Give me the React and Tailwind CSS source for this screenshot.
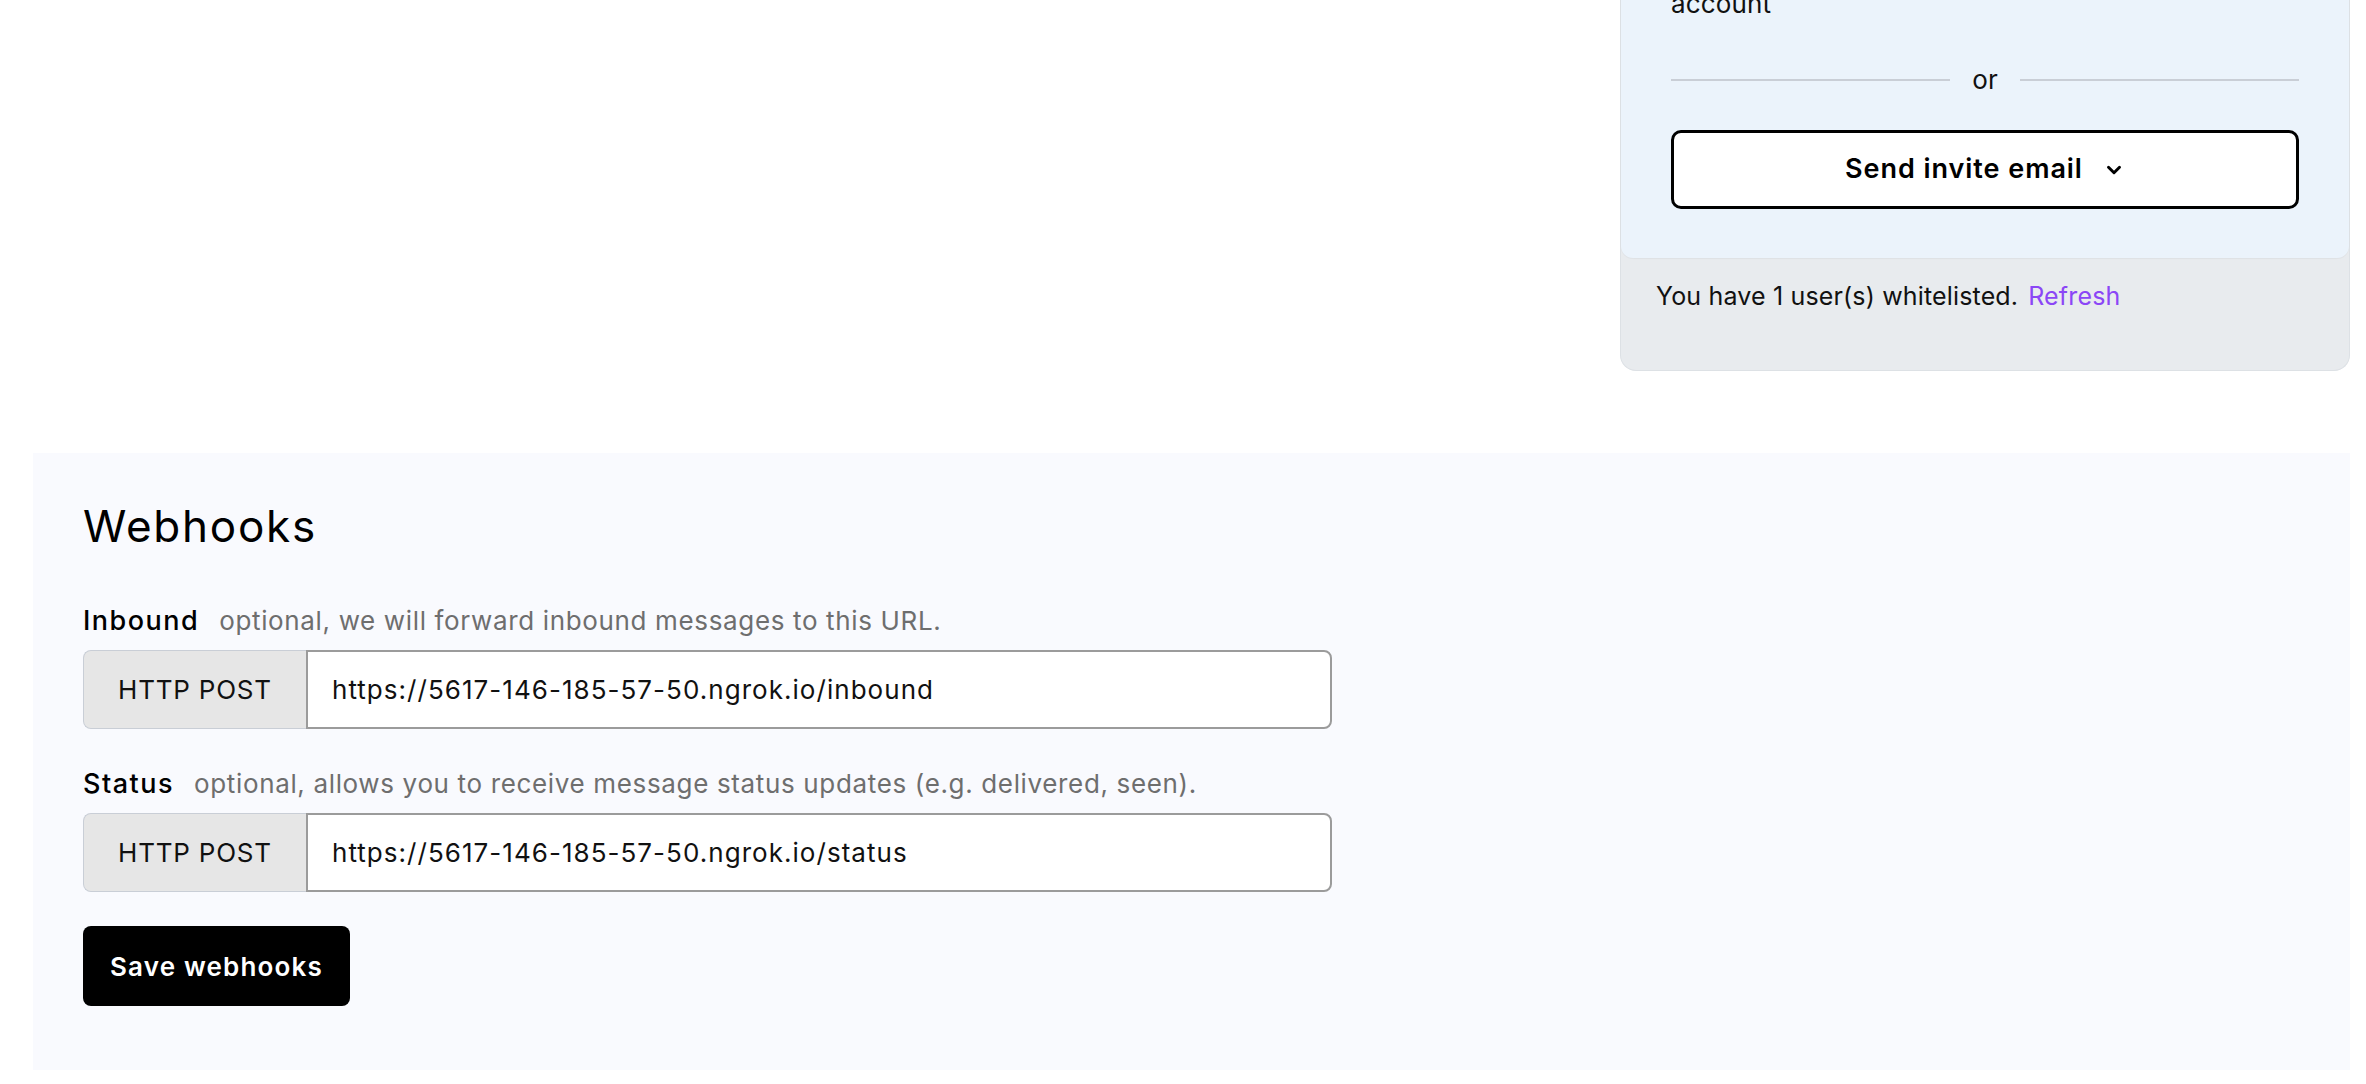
import React from 'react'
import { ChevronDown } from 'lucide-react'

function WebhookField({ label, hint, url }) {
  return (
    <div>
      <div className="flex items-center gap-[20px] leading-[36px]">
        <span className="text-[27px] font-medium tracking-[0.055em] text-black">{label}</span>
        <span className="text-[26px] tracking-[0.025em] text-[#6e6e6e]">{hint}</span>
      </div>
      <div className="mt-[11px] flex h-[79px] w-[1249px]">
        <div className="flex w-[223px] items-center justify-center rounded-l-[8px] border-[1.5px] border-r-0 border-[#c9ced6] bg-[#e6e6e6] text-[26px] tracking-[0.03em] text-[#111]">
          HTTP POST
        </div>
        <div className="flex flex-1 items-center rounded-r-[8px] border-2 border-[#9b9b9b] bg-white pl-[24px] text-[26px] tracking-[0.04em] text-[#111]">
          {url}
        </div>
      </div>
    </div>
  )
}

export default function App() {
  return (
    <div className="min-h-screen bg-white pl-[33px] pr-[16px] font-['Inter','Noto_Sans',sans-serif] tracking-[0.01em] text-black">
      {/* invite panel, top of it scrolled away */}
      <div className="flex justify-end">
        <div className="-mt-[14px] w-[730px] rounded-b-[16px] border border-t-0 border-[#dde1e5] bg-[#e8ebee]">
          <div className="rounded-b-[12px] bg-[#ebf3fb] px-[50px] pb-[49px] shadow-[0_1px_1px_rgba(0,0,0,0.04)]">
            <div className="text-[26px] leading-[36px] text-[#111]">account</div>
            <div className="mt-[40px] flex items-center gap-[22px] leading-[36px]">
              <div className="h-[2px] flex-1 bg-[#c9ced6]"></div>
              <span className="text-[26px] text-[#111]">or</span>
              <div className="h-[2px] flex-1 bg-[#c9ced6]"></div>
            </div>
            <button className="mt-[32px] flex h-[79px] w-full items-center justify-center gap-[20px] rounded-[10px] border-[3px] border-black bg-white text-[27px] font-semibold tracking-[0.035em] text-black">
              Send invite email
              <ChevronDown size={22} strokeWidth={3.2} />
            </button>
          </div>
          <div className="px-[35px] pb-[56px] pt-[20px] text-[25px] leading-[36px] text-[#111]">
            You have 1 user(s) whitelisted.
            <span className="ml-[10px] text-[#8b46f6]">Refresh</span>
          </div>
        </div>
      </div>

      {/* webhooks */}
      <div className="mt-[82px] bg-[#f9fafe] px-[50px] pb-[64px] pt-[47px]">
        <h2 className="text-[44px] font-normal leading-[52px] tracking-[0.04em] text-black">Webhooks</h2>
        <div className="mt-[51px] flex flex-col gap-[37px]">
          <WebhookField
            label="Inbound"
            hint="optional, we will forward inbound messages to this URL."
            url="https://5617-146-185-57-50.ngrok.io/inbound"
          />
          <WebhookField
            label="Status"
            hint="optional, allows you to receive message status updates (e.g. delivered, seen)."
            url="https://5617-146-185-57-50.ngrok.io/status"
          />
        </div>
        <button className="mt-[34px] h-[80px] w-[267px] rounded-[8px] bg-black text-[26px] font-semibold tracking-[0.045em] text-white">
          Save webhooks
        </button>
      </div>
    </div>
  )
}
